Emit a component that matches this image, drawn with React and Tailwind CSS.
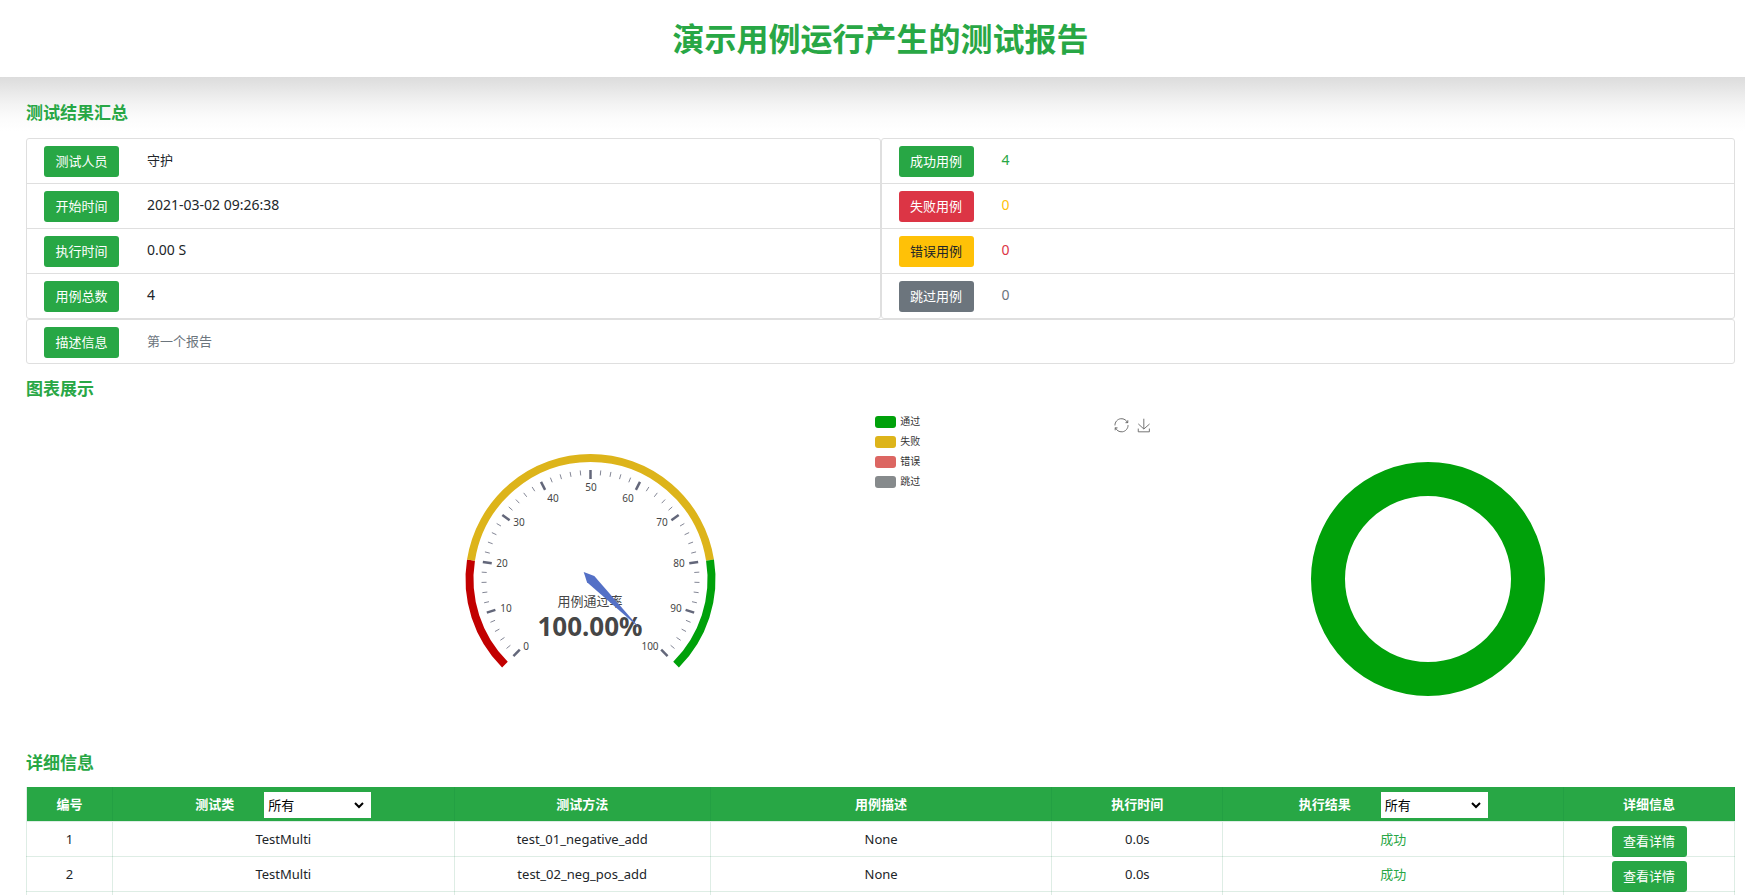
import clsx from "clsx";

const runInfo = [
  { label: "测试人员", value: "守护" },
  { label: "开始时间", value: "2021-03-02 09:26:38" },
  { label: "执行时间", value: "0.00 S" },
  { label: "用例总数", value: "4" },
];

const results = [
  { label: "成功用例", value: "4", button: "bg-[#28a745] text-white", text: "text-[#28a745]" },
  { label: "失败用例", value: "0", button: "bg-[#dc3545] text-white", text: "text-[#ffc107]" },
  { label: "错误用例", value: "0", button: "bg-[#ffc107] text-[#212529]", text: "text-[#dc3545]" },
  { label: "跳过用例", value: "0", button: "bg-[#6c757d] text-white", text: "text-[#6c757d]" },
];

const legend = [
  { name: "通过", color: "bg-[#00a10a]" },
  { name: "失败", color: "bg-[#ddb41a]" },
  { name: "错误", color: "bg-[#dc6662]" },
  { name: "跳过", color: "bg-[#868a8c]" },
];

const cases = [
  { id: 1, cls: "TestMulti", method: "test_01_negative_add", desc: "None", time: "0.0s", result: "成功" },
  { id: 2, cls: "TestMulti", method: "test_02_neg_pos_add", desc: "None", time: "0.0s", result: "成功" },
];

// Gauge geometry: 0 sits at 225deg and 100 at -45deg
const CX = 140.5;
const CY = 140;

const point = (value, r) => {
  const a = ((225 - value * 2.7) * Math.PI) / 180;
  return [CX + r * Math.cos(a), CY - r * Math.sin(a)];
};

const arc = (from, to, r) => {
  const [x1, y1] = point(from, r);
  const [x2, y2] = point(to, r);
  const large = (to - from) * 2.7 > 180 ? 1 : 0;
  return `M${x1} ${y1}A${r} ${r} 0 ${large} 1 ${x2} ${y2}`;
};

const gaugeLabels = [
  [0, 76, 207],
  [10, 56, 169],
  [20, 52, 124],
  [30, 69, 83],
  [40, 103, 59],
  [50, 141, 48],
  [60, 178, 59],
  [70, 212, 83],
  [80, 229, 124],
  [90, 226, 169],
  [100, 200, 207],
];

function SectionTitle({ children }) {
  return <h2 className="text-[17px] leading-6 font-bold text-[#28a745]">{children}</h2>;
}

function Tag({ className = "bg-[#28a745] text-white", children }) {
  return (
    <button type="button" className={clsx("h-[31px] w-[75px] shrink-0 rounded-[3px] pt-px text-[13px]", className)}>
      {children}
    </button>
  );
}

function InfoRow({ label, value, button, text = "text-[#212529]" }) {
  return (
    <li className="flex h-[45px] items-start gap-7 border-b border-[#dfdfdf] px-[17px] pt-[7px] last:h-11 last:border-b-0 only:h-[43px]">
      <Tag className={button}>{label}</Tag>
      <span className={clsx("leading-7", /[\u4e00-\u9fff]/.test(value) ? "text-[13px]" : "text-sm", text)}>{value}</span>
    </li>
  );
}

function Gauge() {
  return (
    <svg width="280" height="240" viewBox="0 0 280 240" fill="none" role="img" aria-label="用例通过率">
      <path d={arc(0, 20, 121)} stroke="#c20000" strokeWidth="8" />
      <path d={arc(20, 80, 121)} stroke="#ddb41a" strokeWidth="8" />
      <path d={arc(80, 100, 121)} stroke="#00a10a" strokeWidth="8" />
      {Array.from({ length: 51 }, (_, i) => {
        const major = i % 5 === 0;
        const [x1, y1] = point(i * 2, 109);
        const [x2, y2] = point(i * 2, major ? 100 : 104);
        return (
          <line
            key={i}
            x1={x1}
            y1={y1}
            x2={x2}
            y2={y2}
            stroke="#63677a"
            strokeWidth={major ? 2.5 : 0.8}
          />
        );
      })}
      {gaugeLabels.map(([n, x, y]) => (
        <text key={n} x={x} y={y + 4} textAnchor="middle" fontSize="10" fill="#464646">
          {n}
        </text>
      ))}
      <text x="140" y="167" textAnchor="middle" fontSize="13" fill="#464646">
        用例通过率
      </text>
      <text x="140" y="197" textAnchor="middle" fontSize="26" fontWeight="700" fill="#464646">
        100.00%
      </text>
      <path d="M133.7 133L144.3 137L190 189.5L137 143.3Z" fill="#5470c6" />
    </svg>
  );
}

function Toolbox() {
  return (
    <div className="flex items-start gap-2 pt-[3px]">
      <button type="button" aria-label="还原">
        <svg className="block" width="15" height="15" viewBox="-2 -1 64 64" fill="none" stroke="#666" strokeWidth="4">
          <path d="M47 18.9h9.8V8.7M56.3 20.1C52.1 9 40.5 0.6 26.8 2.1C12.6 3.7 1.6 16.2 2.1 30.6M13 41.1H3.1v10.2M3.7 39.9c4.2 11.1 15.8 19.5 29.5 18c14.2-1.6 25.2-14.1 24.7-28.5" />
        </svg>
      </button>
      <button type="button" aria-label="保存为图片">
        <svg className="block" width="14" height="15" viewBox="-1 -2 62 64" fill="none" stroke="#666" strokeWidth="4">
          <path d="M4.7 22.9L29.3 45.5L54.7 23.4M4.6 43.6V58H53.8V43.6M29.2 45.1V0" />
        </svg>
      </button>
    </div>
  );
}

function HeadFilter({ id, label, options }) {
  return (
    <div className="flex items-center justify-center gap-[30px]">
      <label htmlFor={id}>{label}</label>
      <select id={id} className="h-[26px] w-[107px] border-r-4 border-white bg-white font-normal text-black">
        {options.map((o) => (
          <option key={o}>{o}</option>
        ))}
      </select>
    </div>
  );
}

function App() {
  return (
    <div className="bg-white font-['Noto_Sans','Noto_Sans_CJK_SC',sans-serif] text-[13px] text-[#212529]">
      <header className="flex h-[77px] items-center justify-center pr-[10px] pl-[26px]">
        <h1 className="text-[32px] leading-10 font-bold text-[#28a745]">演示用例运行产生的测试报告</h1>
      </header>

      <main className="bg-[linear-gradient(#dcdcdc,#e8e8e8_14px,#f3f3f3_27px,#fbfbfb_40px,#fff_54px)] pt-6 pr-[10px] pl-[26px]">
        {/* 汇总 */}
        <section>
          <SectionTitle>测试结果汇总</SectionTitle>
          <div className="mt-[13px] grid grid-cols-2">
            <ul className="rounded-[3px] border border-[#dfdfdf] bg-white">
              {runInfo.map((row) => (
                <InfoRow key={row.label} {...row} />
              ))}
            </ul>
            <ul className="rounded-[3px] border border-[#dfdfdf] bg-white">
              {results.map((row) => (
                <InfoRow key={row.label} {...row} />
              ))}
            </ul>
            <ul className="col-span-2 rounded-[3px] border border-[#dfdfdf] bg-white">
              <InfoRow label="描述信息" value="第一个报告" text="text-[#6c757d]" />
            </ul>
          </div>
        </section>

        {/* 图表 */}
        <section className="mt-[13px]">
          <SectionTitle>图表展示</SectionTitle>
          <div className="mt-[14px] flex h-[336px] items-start">
            <div className="flex w-[49.7%] justify-end pt-6 pr-[145px]">
              <Gauge />
            </div>
            <div className="flex w-[16.1%] items-start justify-between">
              <ul>
                {legend.map((item) => (
                  <li key={item.name} className="flex h-5 items-start gap-1">
                    <span className={clsx("mt-px h-3 w-[21px] rounded-[3px]", item.color)} />
                    <span className="text-[10px] leading-3 text-[#333]">{item.name}</span>
                  </li>
                ))}
              </ul>
              <Toolbox />
            </div>
            <div className="flex flex-1 justify-end pt-[47px] pr-[190px]">
              <svg width="234" height="234" viewBox="0 0 234 234" fill="none" role="img" aria-label="通过 4">
                <circle cx="117" cy="117" r="100" stroke="#00a10a" strokeWidth="34" />
              </svg>
            </div>
          </div>
        </section>

        {/* 详细信息 */}
        <section>
          <SectionTitle>详细信息</SectionTitle>
          <table className="mt-3 w-full table-fixed border-collapse text-center [&_td]:border [&_td]:border-[#0b7a3a22] [&_th]:border-x [&_th]:border-[#0b7a3a22]">
            <thead>
              <tr className="h-[34px] bg-[#28a745] text-white">
                <th className="w-[86px] pt-0.5">编号</th>
                <th className="w-[20%] pt-0.5">
                  <HeadFilter id="cls" label="测试类" options={["所有", "TestMulti"]} />
                </th>
                <th className="w-[15%] pt-0.5">测试方法</th>
                <th className="w-[20%] pt-0.5">用例描述</th>
                <th className="w-[10%] pt-0.5">执行时间</th>
                <th className="pt-0.5">
                  <HeadFilter id="result" label="执行结果" options={["所有", "成功", "失败", "错误", "跳过"]} />
                </th>
                <th className="w-[10%] pt-0.5">详细信息</th>
              </tr>
            </thead>
            <tbody>
              {cases.map((c) => (
                <tr key={c.id} className="h-[35px]">
                  <td className="pt-0.5">{c.id}</td>
                  <td className="pt-0.5">{c.cls}</td>
                  <td className="pt-0.5">{c.method}</td>
                  <td className="pt-0.5">{c.desc}</td>
                  <td className="pt-0.5">{c.time}</td>
                  <td className="pt-0.5 text-[#28a745]">{c.result}</td>
                  <td className="pt-1">
                    <Tag className="-mb-px block mx-auto bg-[#28a745] text-white">查看详情</Tag>
                  </td>
                </tr>
              ))}
              <tr className="h-1">
                {Array.from({ length: 7 }, (_, i) => (
                  <td key={i} className="border-b-0!" />
                ))}
              </tr>
            </tbody>
          </table>
        </section>
      </main>
    </div>
  );
}

export default App;
